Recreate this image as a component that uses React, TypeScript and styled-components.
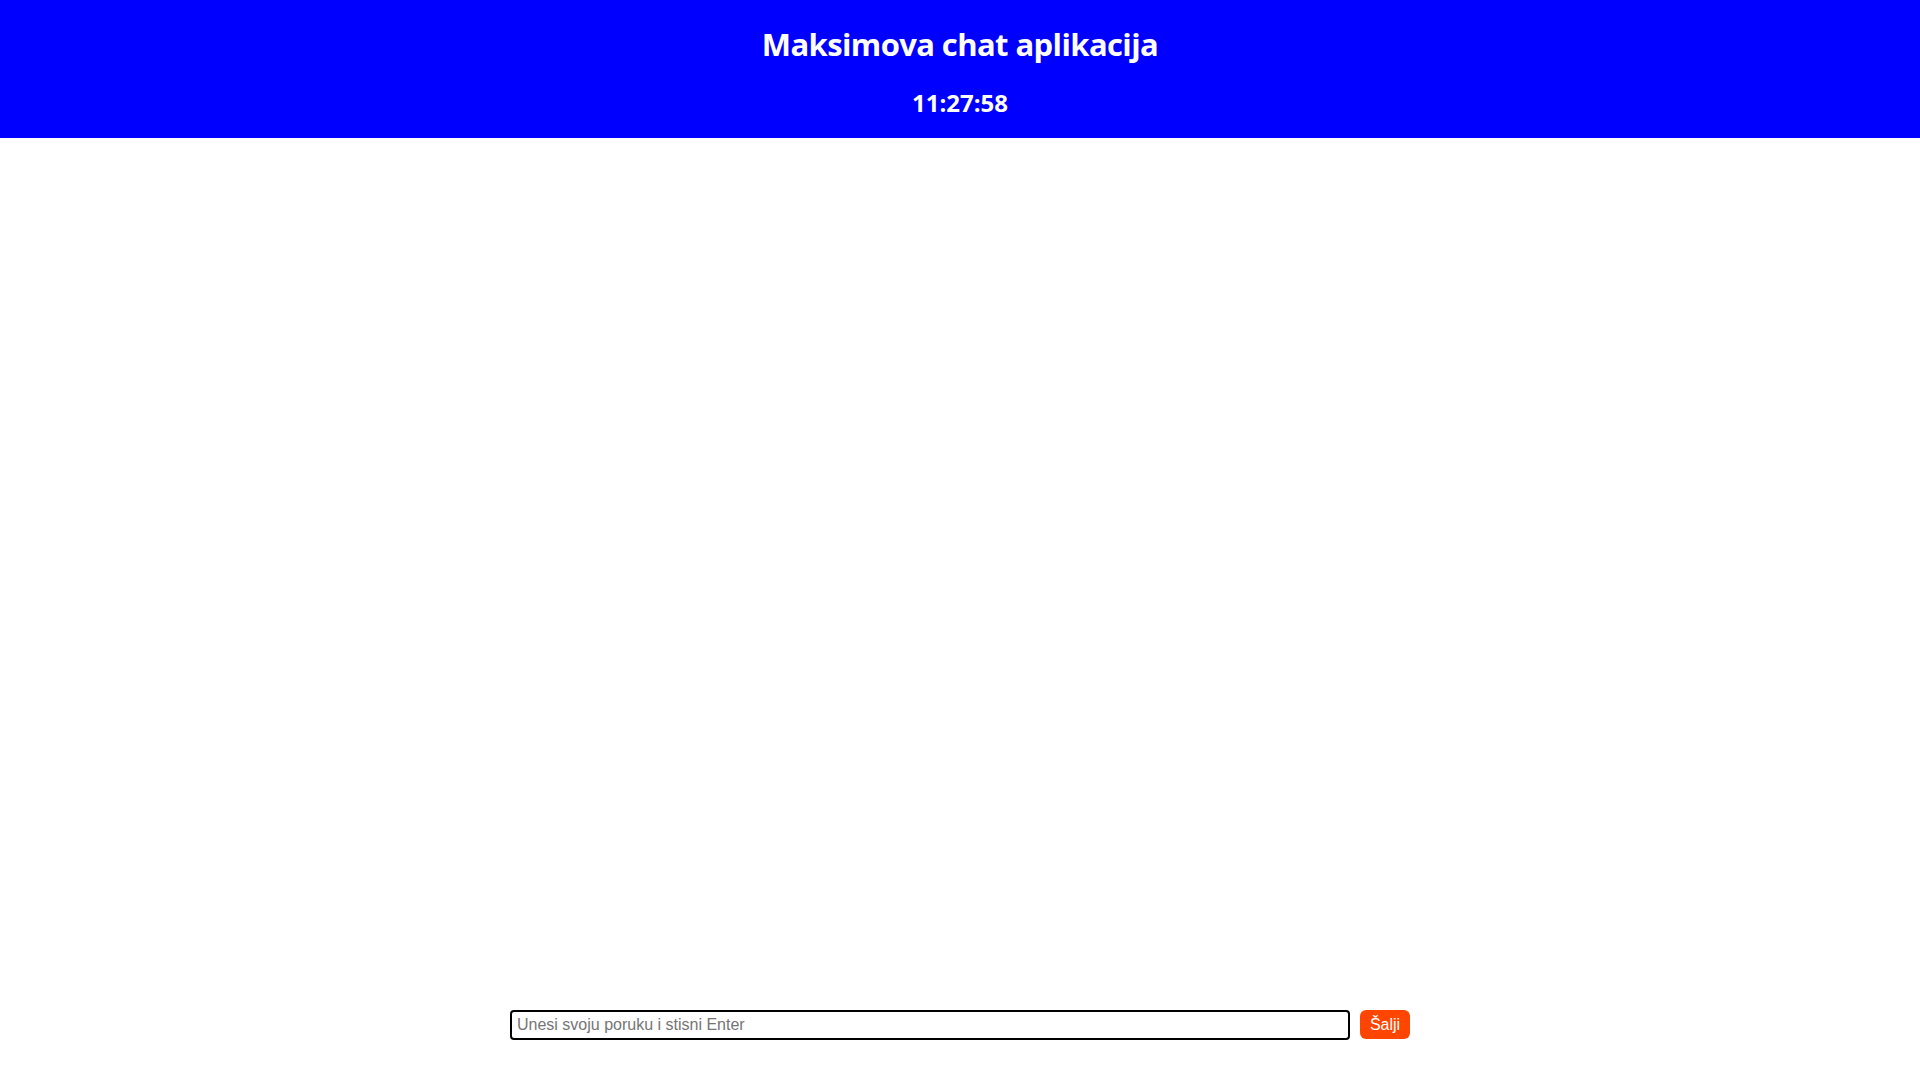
import { useState } from "react";
import { createGlobalStyle, styled } from "styled-components";

const GlobalStyle = createGlobalStyle`
  html, body {
    margin: 0;
    padding: 0;
    background: #ffffff;
  }
  #root {
    height: 100vh;
  }
`;

const App = () => {
  const [value, setValue] = useState<string>("");

  return (
    <>
      <GlobalStyle />
      <StyledPage>
        <StyledHeader>
          <StyledTitle>Maksimova chat aplikacija</StyledTitle>
          <StyledClock>11:27:58</StyledClock>
        </StyledHeader>
        <StyledMessages />
        <StyledForm onSubmit={(e) => e.preventDefault()}>
          <StyledInput
            placeholder="Unesi svoju poruku i stisni Enter"
            value={value}
            onChange={(e) => setValue(e.target.value)}
          />
          <StyledButton type="submit">Šalji</StyledButton>
        </StyledForm>
      </StyledPage>
    </>
  );
};

export default App;

const StyledPage = styled.div`
  height: 100%;
  display: flex;
  flex-direction: column;
`;

const StyledHeader = styled.header`
  height: 138px;
  box-sizing: border-box;
  background-color: #0000ff;
  color: #ffffff;
  display: flex;
  flex-direction: column;
  align-items: center;
  padding-top: 24px;
  font-family: "Open Sans", "Noto Sans", sans-serif;
`;

const StyledTitle = styled.h1`
  margin: 0;
  font-size: 31px;
  font-weight: 700;
  line-height: 40px;
  letter-spacing: -0.6px;
`;

const StyledClock = styled.h2`
  margin: 24px 0 0;
  font-size: 24px;
  font-weight: 700;
  line-height: 30px;
`;

const StyledMessages = styled.main`
  flex: 1;
`;

const StyledForm = styled.form`
  display: flex;
  justify-content: center;
  gap: 10px;
  padding-bottom: 40px;
`;

const StyledInput = styled.input`
  width: 840px;
  height: 30px;
  box-sizing: border-box;
  border: 2px solid #000000;
  border-radius: 4px;
  padding: 0 5px;
  outline: none;
  font-family: "Liberation Sans", Arial, sans-serif;
  font-size: 16px;
  color: #000000;

  &::placeholder {
    color: #757575;
  }
`;

const StyledButton = styled.button`
  width: 50px;
  height: 29px;
  border: none;
  border-radius: 6px;
  background-color: #ff4500;
  color: #ffffff;
  font-family: "Liberation Sans", Arial, sans-serif;
  font-size: 16px;
  padding: 0;
  cursor: pointer;
`;
